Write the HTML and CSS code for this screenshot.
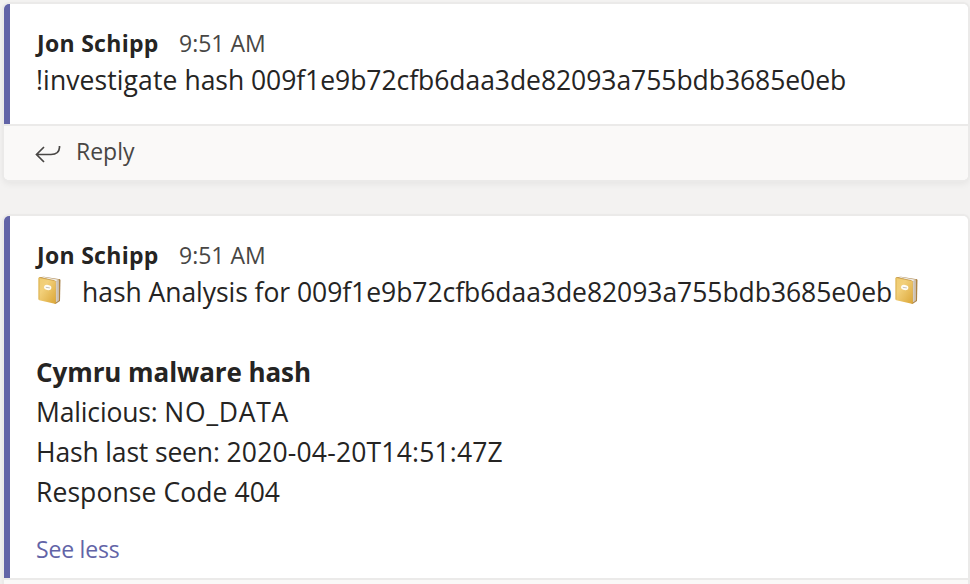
FILE: index.html
```
<!DOCTYPE html>
<html lang="en">
<head>
<meta charset="utf-8">
<title>Conversation</title>
<link rel="stylesheet" href="styles.css">
</head>
<body>
<svg class="defs" aria-hidden="true">
  <defs>
    <linearGradient id="cover" x1="0" y1="0" x2="1" y2="1">
      <stop offset="0" stop-color="#efcc70"/>
      <stop offset=".35" stop-color="#f2d07a"/>
      <stop offset="1" stop-color="#dba637"/>
    </linearGradient>
    <symbol id="ledger" viewBox="0 0 26 30">
      <path d="M3 2.300 8 1.800 24 4.300 24.500 5 24 26 19.500 29 18 28Z" fill="#ad8750"/>
      <path d="M5 2.200 8 1.900 23 4.700 20 6.300Z" fill="#eeeae2"/>
      <path d="M19.600 6.500 22.700 5V25.500L19.600 27.500Z" fill="#dcd5cb"/>
      <path d="M21.200 6V26.300" stroke="#b7ada0" stroke-width=".7"/>
      <path d="M23.500 4.400V26" stroke="#aa8142" stroke-width="1"/>
      <path d="M3.300 2.300 18.500 5.500Q19.800 5.800 19.800 7V28Q19.800 29 18.800 28.700L3.300 25.300Q2.500 25 2.500 24V3.200Q2.500 2.100 3.300 2.300Z" fill="url(#cover)"/>
      <path d="M3 3V24.500" stroke="#d6ab4d" stroke-width=".8"/>
      <path d="M3.500 2.500 18.500 5.700" stroke="#c79843" stroke-width=".7"/>
      <ellipse cx="11.700" cy="12.500" rx="3.700" ry="2.600" fill="#fffdf5" transform="rotate(10 11.700 12.500)"/>
      <path d="M9.800 12.300 13.800 12.900" stroke="#b5b2aa" stroke-width=".8"/>
    </symbol>
  </defs>
</svg>
<main class="thread">
  <article class="card first">
    <div class="message">
      <header class="meta"><span class="author">Jon Schipp</span><time>9:51 AM</time></header>
      <p class="line"><span class="command">!investigate <span class="value">hash 009f1e9b72cfb6daa3de82093a755bdb3685e0eb</span></span></p>
    </div>
    <footer class="reply">
      <svg class="reply-icon" viewBox="0 0 26 20"><path d="M24.500 2V3.500Q24 10.500 16 10.500H1.500M9 3 1.500 10.500 9 18"/></svg>
      <span class="reply-label">Reply</span>
    </footer>
  </article>
  <article class="card second">
    <div class="message">
      <header class="meta"><span class="author">Jon Schipp</span><time>9:51 AM</time></header>
      <p class="line title"><svg class="book"><use href="#ledger"/></svg><span class="analysis">hash Analysis for 009f1e9b72cfb6daa3de82093a755bdb3685e0eb</span><svg class="book"><use href="#ledger"/></svg></p>
      <h2 class="line"><span class="heading">Cymru malware hash</span></h2>
      <p class="line"><span class="label">Malicious: </span><span class="status">NO_DATA</span></p>
      <p class="line"><span class="label">Hash last seen: </span><span class="date">2020-04-20T14:51:47Z</span></p>
      <p class="line"><span class="code">Response Code 404</span></p>
      <a class="less">See less</a>
    </div>
    <div class="divider"></div>
  </article>
</main>
</body>
</html>
```
FILE: styles.css
```
* { box-sizing: border-box; }
body {
  margin: 0;
  height: 584px;
  overflow: hidden;
  background: #f3f2f1;
  color: #252423;
  font-family: "Open Sans", "Noto Sans", sans-serif;
}
.defs { position: absolute; width: 0; height: 0; }
.thread { height: 584px; overflow: hidden; padding: 4px 2px 0 4px; display: flex; flex-direction: column; gap: 36px; }
.card {
  flex: none;
  background: #fff;
  border-radius: 5px;
  overflow: hidden;
  box-shadow: 0 0 0 2px #ebeae9, 0 3px 7px 1px rgba(0, 0, 0, .06);
}
.second { height: 368px; border-radius: 5px 5px 0 0; background: #faf9f8; }
.message { border-left: 6px solid #6264a7; padding: 21px 0 0 26px; background: #fff; }
.first .message { height: 120px; }
.second .message { height: 362px; }
.meta { height: 37px; display: flex; font-size: 23px; line-height: 37px; white-space: nowrap; }
.author { width: 143px; padding-left: 1px; font-weight: 700; letter-spacing: .3px; }
time { color: #484644; letter-spacing: 0; }
.line { margin: 0; height: 40px; line-height: 37px; font-size: 26.5px; white-space: nowrap; }
h2.line { font-size: 26px; font-weight: 700; margin-top: 40px; letter-spacing: -.08px; }
.title { display: flex; }
.book { width: 26px; height: 30px; margin-top: 0.5px; flex: none; }
.analysis { width: 809px; margin: 0 2px 0 20px; letter-spacing: -.05px; }
.command { letter-spacing: .1px; }
.value { letter-spacing: -.05px; }
.label { letter-spacing: -.15px; }
.status { letter-spacing: .75px; }
.date { letter-spacing: .18px; }
.code { letter-spacing: .08px; }
.less { display: block; margin-top: 18px; color: #6264a7; font-size: 23px; line-height: 34px; letter-spacing: -.2px; }
.reply {
  height: 56px;
  padding: 0 0 4px 31px;
  display: flex;
  align-items: center;
  gap: 15px;
  background: #faf9f8;
  border-top: 2px solid #ebeae9;
  color: #484644;
  font-size: 23px;
}
.reply-icon { width: 26px; height: 20px; margin-top: 5px; fill: none; stroke: #484644; stroke-width: 1.7; }
.divider { height: 2px; background: #ebeae9; }
```
